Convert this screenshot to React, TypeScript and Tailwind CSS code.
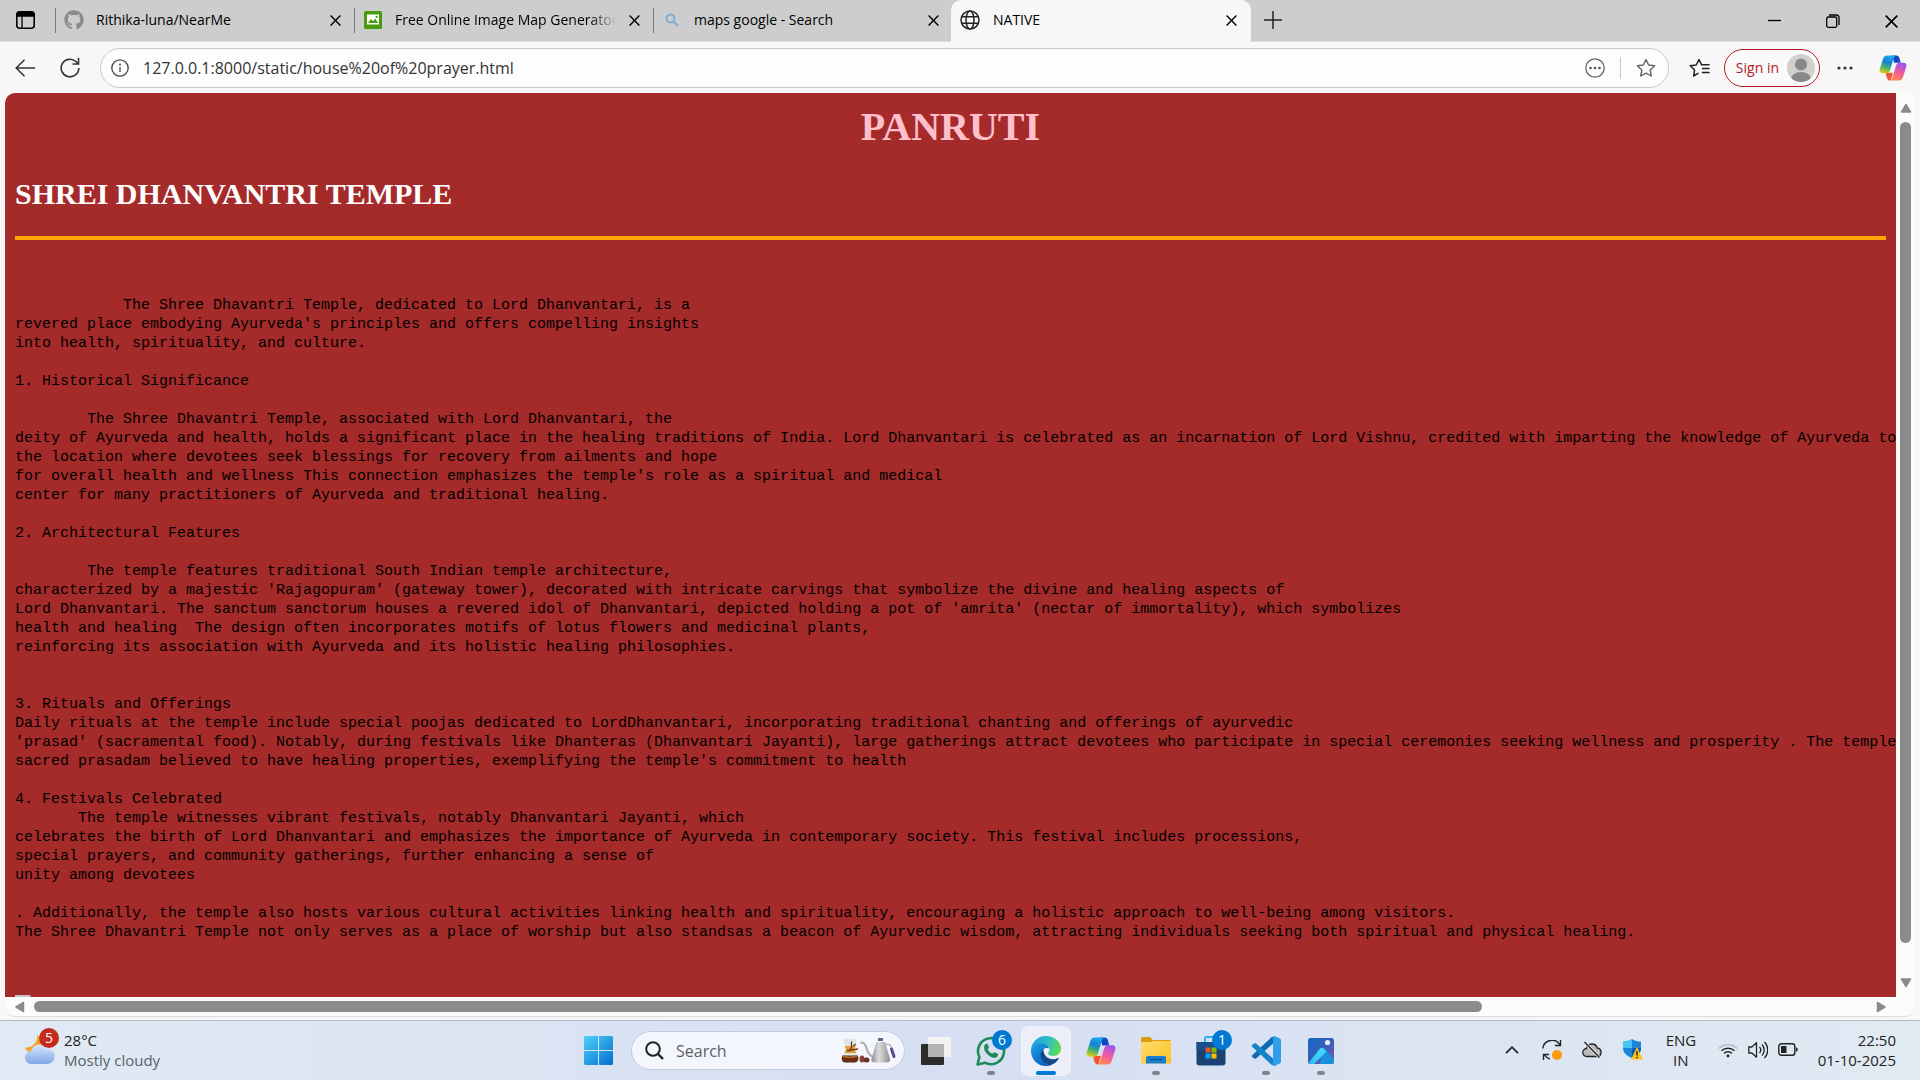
import type { ReactNode } from "react";
import { FaGithub } from "react-icons/fa";

const ui = "font-['Open_Sans','Noto_Sans',sans-serif]";

function CloseIcon({ size = 11 }: { size?: number }) {
  return (
    <svg width={size} height={size} viewBox="0 0 11 11" fill="none" stroke="currentColor" strokeWidth="1.4">
      <path d="M.6.6l9.8 9.8M10.4.6L.6 10.4" />
    </svg>
  );
}

function GlobeIcon() {
  return (
    <svg width="20" height="20" viewBox="0 0 20 20" fill="none" stroke="#222" strokeWidth="1.5">
      <circle cx="10" cy="10" r="9" />
      <ellipse cx="10" cy="10" rx="4" ry="9" />
      <path d="M1.8 6.8h16.4M1.8 13.2h16.4" />
    </svg>
  );
}

function PictureIcon() {
  return (
    <svg width="18" height="18" viewBox="0 0 18 18">
      <rect width="18" height="18" rx="1.5" fill="#4a9c0c" />
      <rect x="3" y="3.5" width="12" height="10" fill="#fff" />
      <path d="M4 12l3-4 2 2.2 2-2.6 3.2 4.4z" fill="#4a9c0c" />
      <circle cx="12.6" cy="5.8" r="1.1" fill="#4a9c0c" />
    </svg>
  );
}

function SearchTabIcon() {
  return (
    <svg width="14" height="14" viewBox="0 0 14 14" fill="none" stroke="#7aaad6" strokeWidth="1.8">
      <circle cx="5.5" cy="5.5" r="4" />
      <path d="M8.5 8.5l4.5 4.5" />
    </svg>
  );
}

function Tab({ icon, title, faded }: { icon: ReactNode; title: string; faded?: boolean }) {
  return (
    <div className="flex h-10 w-[299px] items-center">
      <div className="h-[25px] w-px shrink-0 bg-[#777]" />
      <div className="ml-2 flex w-5 shrink-0 items-center justify-center">{icon}</div>
      <button
        className={
          faded
            ? "ml-3 w-[221px] overflow-hidden whitespace-nowrap text-left [mask-image:linear-gradient(to_right,#000_88%,transparent)]"
            : "ml-3 w-[221px] overflow-hidden whitespace-nowrap text-left"
        }
      >
        {title}
      </button>
      <button aria-label="Close tab" className="ml-[13px]">
        <CloseIcon />
      </button>
    </div>
  );
}

function TabStrip() {
  return (
    <header className="flex h-[42px] items-start border-b border-[#dedede] bg-[#cdcdcd] text-sm text-black">
      <button aria-label="Tab actions" className="mt-[11px] mr-[20px] ml-4">
        <svg width="19" height="18" viewBox="0 0 19 18" fill="none" stroke="#000" strokeWidth="1.6">
          <rect x=".8" y=".8" width="17.4" height="16.4" rx="3" />
          <path d="M1 3.2A2.6 2.6 0 013.500 1h12a2.600 2.600 0 012.500 2.500V5H1z" fill="#000" />
          <path d="M6 5v12" strokeWidth="1.300" />
        </svg>
      </button>
      <Tab icon={<FaGithub size={20} color="#8a8d90" />} title="Rithika-luna/NearMe" />
      <Tab icon={<PictureIcon />} title="Free Online Image Map Generator" faded />
      <Tab icon={<SearchTabIcon />} title="maps google - Search" />
      <div className="-ml-px flex h-[42px] w-[300px] items-center rounded-t-[10px] bg-[#f7f7f7] pb-[2px]">
        <div className="ml-[9px]">
          <GlobeIcon />
        </div>
        <button className="ml-[13px] flex-1 text-left">NATIVE</button>
        <button aria-label="Close tab" className="mr-[14px]">
          <CloseIcon />
        </button>
      </div>
      <button aria-label="New tab" className="mt-[11px] ml-[13px]">
        <svg width="18" height="18" viewBox="0 0 18 18" stroke="#222" strokeWidth="1.500">
          <path d="M9 0v18M0 9h18" />
        </svg>
      </button>
      <div className="mt-[14px] mr-[22px] ml-auto flex items-center gap-[45px]">
        <button aria-label="Minimize">
          <svg width="13" height="14" viewBox="0 0 13 14" stroke="#000" strokeWidth="1.300">
            <path d="M0 6.500h13" />
          </svg>
        </button>
        <button aria-label="Restore">
          <svg width="14" height="14" viewBox="0 0 14 14" fill="none" stroke="#000" strokeWidth="1.300">
            <rect x=".7" y="3" width="10" height="10.300" rx="1.500" />
            <path d="M3 1h7.500A2.500 2.500 0 0113 3.500V11" />
          </svg>
        </button>
        <button aria-label="Close window">
          <CloseIcon size={13} />
        </button>
      </div>
    </header>
  );
}

const starPath = "M10 1.500l2.600 5.500 6 .8-4.400 4.200 1.100 6L10 15.100 4.700 18l1.100-6L1.400 7.800l6-.8z";

function Toolbar() {
  return (
    <div className="flex h-[51px] items-center bg-[#f7f7f7]">
      <button aria-label="Back" className="ml-[15px]">
        <svg width="20" height="18" viewBox="0 0 20 18" fill="none" stroke="#333" strokeWidth="1.500">
          <path d="M20 9H1M9.500.8L1.200 9l8.300 8.200" />
        </svg>
      </button>
      <button aria-label="Refresh" className="ml-[25px]">
        <svg width="20" height="20" viewBox="0 0 20 20" fill="none" stroke="#333" strokeWidth="1.600">
          <path d="M18.800 10a8.800 8.800 0 11-2.900-6.500l2.300 2.300M18.500 0v6h-6" />
        </svg>
      </button>
      <div className="ml-5 flex h-10 flex-1 items-center rounded-full border border-[#c9c9c9] bg-[#fdfdfd]">
        <svg className="ml-[10px]" width="18" height="18" viewBox="0 0 18 18" fill="none" stroke="#444" strokeWidth="1.300">
          <circle cx="9" cy="9" r="8.200" />
          <path d="M9 8v5" />
          <circle cx="9" cy="5.500" r=".4" fill="#444" />
        </svg>
        <input
          aria-label="Address"
          readOnly
          defaultValue="127.0.0.1:8000/static/house%20of%20prayer.html"
          className="ml-[14px] min-w-0 flex-1 bg-transparent text-base text-[#333] outline-none"
        />
        <button aria-label="Page options">
          <svg width="20" height="20" viewBox="0 0 20 20" fill="none" stroke="#666" strokeWidth="1.300">
            <circle cx="10" cy="10" r="9.200" />
            <g fill="#555" stroke="none">
              <circle cx="5.500" cy="10" r="1.300" />
              <circle cx="10" cy="10" r="1.300" />
              <circle cx="14.500" cy="10" r="1.300" />
            </g>
          </svg>
        </button>
        <div className="mx-[15px] h-[22px] w-px bg-[#c8c8c8]" />
        <button aria-label="Add to favorites" className="mr-3">
          <svg width="20" height="20" viewBox="0 0 20 20" fill="none" stroke="#666" strokeWidth="1.400" strokeLinejoin="round">
            <path d={starPath} />
          </svg>
        </button>
      </div>
      <button aria-label="Favorites" className="ml-5">
        <svg width="21" height="20" viewBox="0 0 21 20" fill="none" stroke="#222" strokeWidth="1.500" strokeLinejoin="round" strokeLinecap="round">
          <path d="M9 15.300L4.600 18l1-6L1.200 7.800l6-.8L10 1.500l2.600 5.300h7.400M13.500 10.500h6.500M13.500 14.500h6.500" />
        </svg>
      </button>
      <button className="ml-[14px] flex h-[38px] items-center gap-2 rounded-full border border-[#b5191d] bg-[#fafafa] pr-1 pl-[11px] text-sm text-[#b5191d]">
        Sign in
        <svg width="28" height="28" viewBox="0 0 28 28">
          <clipPath id="avatar">
            <circle cx="14" cy="14" r="14" />
          </clipPath>
          <g clipPath="url(#avatar)">
            <rect width="28" height="28" fill="#d2d0ce" />
            <circle cx="14" cy="10.500" r="6" fill="#8a8886" />
            <ellipse cx="14" cy="25" rx="10" ry="7" fill="#8a8886" />
          </g>
        </svg>
      </button>
      <button aria-label="Settings and more" className="ml-[17px]">
        <svg width="16" height="4" viewBox="0 0 16 4" fill="#333">
          <circle cx="2" cy="2" r="1.600" />
          <circle cx="8" cy="2" r="1.600" />
          <circle cx="14" cy="2" r="1.600" />
        </svg>
      </button>
      <button aria-label="Copilot" className="mr-[13px] ml-[26px]">
        <CopilotIcon id="bar" size={28} />
      </button>
    </div>
  );
}

function CopilotIcon({ id, size }: { id: string; size: number }) {
  return (
    <svg width={size} height={size} viewBox="0 0 30 30">
      <defs>
        <linearGradient id={id + "a"} x1="0.500" y1="0" x2="0.200" y2="1">
          <stop offset="0" stopColor="#1aa7f0" />
          <stop offset=".35" stopColor="#1583d8" />
          <stop offset=".65" stopColor="#45b36b" />
          <stop offset="1" stopColor="#f3cf12" />
        </linearGradient>
        <linearGradient id={id + "b"} x1="0.700" y1="0" x2="0.300" y2="1">
          <stop offset="0" stopColor="#9a55f0" />
          <stop offset=".5" stopColor="#ee5aa0" />
          <stop offset="1" stopColor="#ff8a4c" />
        </linearGradient>
      </defs>
      <path d="M14 1.500h4.500c2 0 2.800 1.200 3.400 3l1.400 5h-7z" fill="#1248c4" />
      <path d="M7 20h8l-2.500 8.500c-2.800 0-3.500-1-4.100-3z" fill="#f4553a" />
      <path d="M9 1.500h9c-1.500.8-2 2.500-2.600 4.500l-3.600 11.500c-.7 2.200-1.600 3.200-3.800 3.200H4c-3 0-4-2-3.200-4.600L4.400 5C5.200 2.600 6.500 1.500 9 1.500z" fill={"url(#" + id + "a)"} />
      <path d="M21 28.500h-9c1.500-.8 2-2.500 2.600-4.500l3.600-11.500c.7-2.200 1.600-3.200 3.800-3.200h4c3 0 4 2 3.200 4.600L25.600 25c-.8 2.400-2.100 3.500-4.600 3.500z" fill={"url(#" + id + "b)"} />
    </svg>
  );
}

const article = `            The Shree Dhavantri Temple, dedicated to Lord Dhanvantari, is a
revered place embodying Ayurveda's principles and offers compelling insights
into health, spirituality, and culture.

1. Historical Significance

        The Shree Dhavantri Temple, associated with Lord Dhanvantari, the
deity of Ayurveda and health, holds a significant place in the healing traditions of India. Lord Dhanvantari is celebrated as an incarnation of Lord Vishnu, credited with imparting the knowledge of Ayurveda to h
the location where devotees seek blessings for recovery from ailments and hope
for overall health and wellness This connection emphasizes the temple's role as a spiritual and medical
center for many practitioners of Ayurveda and traditional healing.

2. Architectural Features

        The temple features traditional South Indian temple architecture,
characterized by a majestic 'Rajagopuram' (gateway tower), decorated with intricate carvings that symbolize the divine and healing aspects of
Lord Dhanvantari. The sanctum sanctorum houses a revered idol of Dhanvantari, depicted holding a pot of 'amrita' (nectar of immortality), which symbolizes
health and healing  The design often incorporates motifs of lotus flowers and medicinal plants,
reinforcing its association with Ayurveda and its holistic healing philosophies.


3. Rituals and Offerings
Daily rituals at the temple include special poojas dedicated to LordDhanvantari, incorporating traditional chanting and offerings of ayurvedic
'prasad' (sacramental food). Notably, during festivals like Dhanteras (Dhanvantari Jayanti), large gatherings attract devotees who participate in special ceremonies seeking wellness and prosperity . The temple i
sacred prasadam believed to have healing properties, exemplifying the temple's commitment to health

4. Festivals Celebrated
       The temple witnesses vibrant festivals, notably Dhanvantari Jayanti, which
celebrates the birth of Lord Dhanvantari and emphasizes the importance of Ayurveda in contemporary society. This festival includes processions,
special prayers, and community gatherings, further enhancing a sense of
unity among devotees

. Additionally, the temple also hosts various cultural activities linking health and spirituality, encouraging a holistic approach to well-being among visitors.
The Shree Dhavantri Temple not only serves as a place of worship but also standsas a beacon of Ayurvedic wisdom, attracting individuals seeking both spiritual and physical healing.`;

function Arrow({ d, w, h }: { d: string; w: number; h: number }) {
  return (
    <svg className="shrink-0" width={w} height={h} viewBox={`0 0 ${w} ${h}`} fill="#8b8b8b" stroke="#8b8b8b" strokeWidth="1.500" strokeLinejoin="round">
      <path d={d} />
    </svg>
  );
}

function PageView() {
  return (
    <div className="flex min-h-0 flex-1 bg-[#f7f7f7] pr-[5px] pb-[3px] pl-[5px]">
      <div className="flex min-w-0 flex-1 overflow-hidden rounded-[10px] border-b border-[#dcdcdc] bg-[#fcfcfc]">
        <div className="flex min-w-0 flex-1 flex-col">
          <main className="flex min-h-0 flex-1 flex-col overflow-hidden bg-[#a52a2a] px-[10px] font-['Liberation_Serif',serif]">
            <h1 className="mt-[11px] text-center text-[40px] leading-[46px] font-bold text-[#ffc0cb]">PANRUTI</h1>
            <h2 className="mt-[27px] text-[30px] leading-[34px] font-bold text-white">SHREI DHANVANTRI TEMPLE</h2>
            <hr className="mt-[25px] h-1 shrink-0 border-0 bg-[#ffa500]" />
            <pre className="mt-14 font-['Liberation_Mono',monospace] text-[15px] leading-[19px] text-black">{article}</pre>
            <div className="mt-auto h-[2px] w-4 shrink-0 rounded-tr bg-[#c9c4c4]" />
          </main>
          <div className="flex h-[19px] shrink-0 items-center pr-[10px] pl-[10px]">
            <Arrow d="M8.500 1.500v9L1 6z" w={10} h={12} />
            <div className="mx-[9px] flex-1">
              <div className="h-[11px] w-[79%] rounded-full bg-[#8b8b8b]" />
            </div>
            <Arrow d="M1.500 1.500v9L9 6z" w={10} h={12} />
          </div>
        </div>
        <div className="flex w-[19px] shrink-0 flex-col items-center pt-[10px] pb-[28px]">
          <Arrow d="M1.500 9h9L6 1.500z" w={12} h={10} />
          <div className="mt-[9px] mb-2 min-h-0 flex-1">
            <div className="h-[96.800%] w-[11px] rounded-full bg-[#8b8b8b]" />
          </div>
          <Arrow d="M1.500 1h9L6 8.500z" w={12} h={10} />
        </div>
      </div>
    </div>
  );
}

function Badge({ children }: { children: ReactNode }) {
  return (
    <span className="absolute top-[3px] right-[3px] flex size-5 items-center justify-center rounded-full bg-[#0078d4] text-sm leading-5 text-white">
      {children}
    </span>
  );
}

function TaskButton({ label, state, badge, children }: { label: string; state?: "open" | "active"; badge?: string; children: ReactNode }) {
  return (
    <button
      aria-label={label}
      className={
        state === "active"
          ? "relative flex size-12 items-center justify-center rounded-md bg-[#eceff9] outline outline-white/60"
          : "relative flex size-12 items-center justify-center"
      }
    >
      {children}
      {badge && <Badge>{badge}</Badge>}
      {state === "open" && <span className="absolute bottom-0 left-5 h-1 w-2 rounded-full bg-[#7f838c]" />}
      {state === "active" && <span className="absolute bottom-0 left-[14px] h-1 w-5 rounded-full bg-[#0078d4]" />}
    </button>
  );
}

function WhatsAppIcon() {
  return (
    <svg width="30" height="30" viewBox="0 0 30 30" fill="none">
      <path d="M1.500 28.500l1.900-7.500A13 13 0 119 26.700z" stroke="#1f8a55" strokeWidth="2.600" strokeLinejoin="round" />
      <path d="M9 8.500c1-1.200 2.400-1 2.900.2l1 2.300c.3.800-.8 1.700-1.200 2.200 1 2 2.600 3.500 4.900 4.600.6-.5 1.300-1.700 2.200-1.400l2.500 1.200c1 .5 1 1.600.3 2.600-1.400 2-4 2-6 1-3.500-1.600-5.500-3.700-7-6.900-.8-2-.8-4.300.4-5.800z" fill="#1f8a55" />
    </svg>
  );
}

function EdgeIcon() {
  return (
    <svg width="30" height="30" viewBox="0 0 30 30">
      <defs>
        <linearGradient id="edgeTop" x1="0" y1="0.300" x2="1" y2="0.600">
          <stop offset="0" stopColor="#1d9fe0" />
          <stop offset=".5" stopColor="#2dbfc4" />
          <stop offset="1" stopColor="#62dc50" />
        </linearGradient>
        <linearGradient id="edgeLeft" x1="0" y1="0" x2="0.700" y2="1">
          <stop offset="0" stopColor="#1da0e8" />
          <stop offset="1" stopColor="#0c62c0" />
        </linearGradient>
      </defs>
      <path d="M0 14C.5 6 7 0 15 0c8.500 0 15 6 15 12.500 0 4.500-3.500 7.500-7.500 7.500-3.500 0-5.500-1-5.500-2.500 0-1 1.500-1.500 1.500-4 0-3-3.500-5.500-8-5.500C6 8 1.500 10.500 0 14z" fill="url(#edgeTop)" />
      <path d="M0 14c1-4 5.500-6.500 10-6.500 4 0 7.500 2 8.300 5-3-1.700-8.300 0-8.300 6.500 0 5.500 4 9.500 9 10.400-1.300.4-2.600.6-4 .6C6 30-.3 23 0 14z" fill="url(#edgeLeft)" />
      <path d="M12.500 13c-3 2-3.500 6-2.500 9 1.400 4.500 5.500 7.300 9 7.400 3.500-1 6.800-3.400 8.700-6.600.4-.7-.2-1-.7-.7-2 1-4.200 1.300-6 1.100-5-.5-9-4.700-8.500-10.200z" fill="#114a8b" />
    </svg>
  );
}

function FolderIcon() {
  return (
    <svg width="30" height="27" viewBox="0 0 30 27">
      <defs>
        <linearGradient id="folder" x1="0" y1="0" x2="1" y2="1">
          <stop offset="0" stopColor="#ffdc6a" />
          <stop offset="1" stopColor="#fcc02a" />
        </linearGradient>
      </defs>
      <path d="M0 1.500A1.500 1.500 0 011.500 0H9l3 3h16.500A1.500 1.500 0 0130 4.500V10H0z" fill="#dd9a0a" />
      <path d="M0 5h10l2-1h17a1 1 0 011 1v20.500a1 1 0 01-1 1H1a1 1 0 01-1-1z" fill="url(#folder)" />
      <path d="M5 26.500V21a2 2 0 012-2h16a2 2 0 012 2v5.500z" fill="#1a7fd0" />
      <path d="M9 22.500h12" stroke="#0b4f92" strokeWidth="1.300" />
    </svg>
  );
}

function StoreIcon() {
  return (
    <svg width="30" height="30" viewBox="0 0 30 30">
      <path d="M9 7V2.500A1.500 1.500 0 0110.500 1h9A1.500 1.500 0 0121 2.500V7" fill="none" stroke="#2bb2ec" strokeWidth="2" />
      <path d="M.5 6h29v20.500A3 3 0 0126.500 29.500h-23a3 3 0 01-3-3z" fill="#1a4273" />
      <path d="M.5 6h29v8H.5z" fill="#17508c" />
      <path d="M9.500 11.500h5v5h-5z" fill="#f25022" />
      <path d="M15.500 11.500h5v5h-5z" fill="#7fba00" />
      <path d="M9.500 17.500h5v5h-5z" fill="#00a4ef" />
      <path d="M15.500 17.500h5v5h-5z" fill="#ffb900" />
    </svg>
  );
}

function CodeIcon() {
  return (
    <svg width="30" height="30" viewBox="0 0 30 30">
      <path d="M22 7.500L4.500 23 1.500 21.500a1.500 1.500 0 01-.3-2.200L20.500 1.200 23 .5z" fill="#0f6db3" />
      <path d="M22 22.500L4.500 7 1.500 8.500a1.500 1.500 0 00-.3 2.200l19.300 18.100 2.500.7z" fill="#1583c9" />
      <path d="M22 .3c.4-.4 1-.4 1.500-.2l5.500 2.500c.7.4 1 1 1 1.800v21.200c0 .8-.3 1.400-1 1.800l-5.500 2.500c-.5.200-1.100.2-1.500-.2z" fill="#2f9fea" />
    </svg>
  );
}

function PhotosIcon() {
  return (
    <svg width="26" height="26" viewBox="0 0 26 26">
      <defs>
        <linearGradient id="photos" x1="0" y1="0" x2="1" y2="1">
          <stop offset="0" stopColor="#0f6cc4" />
          <stop offset=".5" stopColor="#3a5db8" />
          <stop offset="1" stopColor="#8a55b0" />
        </linearGradient>
        <linearGradient id="hill" x1="0" y1="1" x2="1" y2="0">
          <stop offset="0" stopColor="#2bc3f5" />
          <stop offset="1" stopColor="#48d8ff" />
        </linearGradient>
      </defs>
      <rect width="26" height="26" rx="2.500" fill="url(#photos)" />
      <path d="M14 10.500c1-1 2-.8 3 .3L26 21v2.500a2.500 2.500 0 01-2.500 2.500H12z" fill="#1791e0" />
      <path d="M1 24.500L11.500 11c1.500-1.700 3-1.700 4.500 0l2.500 2.500L6 26H2.500z" fill="url(#hill)" />
      <circle cx="19.500" cy="4.500" r="2.600" fill="#e8f2ff" />
    </svg>
  );
}

function CoffeeArt() {
  return (
    <svg className="shrink-0" width="55" height="26" viewBox="0 0 55 26">
      <defs>
        <linearGradient id="kettle" x1="0" x2="1">
          <stop offset="0" stopColor="#8d8d8d" />
          <stop offset=".4" stopColor="#dcdcdc" />
          <stop offset="1" stopColor="#8f8f8f" />
        </linearGradient>
      </defs>
      <path d="M2 1h14l-3.500 10 5 8c1 3-.5 5.500-3 5.500H4c-3 0-4-2.500-3-5.500l4.500-8z" fill="#dfe6ea" />
      <path d="M1.500 17.500h15.300c1.500 3.500-.2 7-3 7H4c-3 0-4-3.500-2.500-7z" fill="#6b2d11" />
      <path d="M2 18c3 1.500 11 1.500 14 0" stroke="#b36a30" strokeWidth="1.500" fill="none" />
      <path d="M3.500 8h11.500l-1.500 3 2 4h-12L5 11z" fill="#e3a03a" />
      <path d="M11 3.500c-2 3 1 4-1 7l-2 3M6 12.500l11-1.500M12 8l3-2" stroke="#7a3512" strokeWidth="1.300" fill="none" />
      <ellipse cx="21" cy="21" rx="2.500" ry="3.600" fill="#8a4136" />
      <ellipse cx="25.500" cy="22" rx="3" ry="2.500" fill="#6e2e26" />
      <path d="M19.500 4.500c8-.5 4 11 12 14" stroke="#a9a9a9" strokeWidth="2" fill="none" />
      <path d="M35.500 4h8.500l5 17c.7 2.500-1 3.500-4 3.500H34.500c-3 0-4.700-1-4-3.500z" fill="url(#kettle)" />
      <path d="M37 0h5v3h-5z" fill="#6d5fa0" />
      <path d="M44 6.500c4-1 6 0 7 4" stroke="#bbb" strokeWidth="1.500" fill="none" />
      <path d="M50.500 11l2.500 7.500" stroke="#5b4b92" strokeWidth="3" strokeLinecap="round" />
    </svg>
  );
}

function Taskbar() {
  return (
    <footer className="grid h-[60px] shrink-0 grid-cols-[1fr_auto_1fr] items-center border-t border-[#b3b9c7] bg-linear-to-r from-[#e0eaf4] via-[#d6dff2] to-[#e0eaf3] text-[#222]">
      <button className="ml-[25px] flex w-fit items-center gap-[9px] pb-[2px] text-left">
        <span className="relative">
          <svg width="30" height="30" viewBox="0 0 30 30">
            <defs>
              <linearGradient id="cloud" x1="0" y1="0" x2="0" y2="1">
                <stop offset="0" stopColor="#d8e6fb" />
                <stop offset="1" stopColor="#7fa6e6" />
              </linearGradient>
            </defs>
            <path d="M12 0c1 7-4 13-12 12.500C2 18 8 20 13 17s6-13-1-17z" fill="#f5a322" />
            <path d="M7 29a6.500 6.500 0 01-1-13 8 8 0 0115-2 7.500 7.500 0 012 15z" fill="url(#cloud)" />
          </svg>
          <span className="absolute -top-[7px] left-[14px] flex size-5 items-center justify-center rounded-full bg-[#c42b1c] text-sm leading-5 text-white">5</span>
        </span>
        <span className="flex flex-col text-[15px] leading-5">
          <span>28°C</span>
          <span className="text-[#5a6068]">Mostly cloudy</span>
        </span>
      </button>

      <div className="flex items-center pl-[9px]">
        <button aria-label="Start" className="mr-[18px]">
          <svg width="29" height="29" viewBox="0 0 29 29">
            <defs>
              <linearGradient id="win" gradientUnits="userSpaceOnUse" x1="0" y1="0" x2="29" y2="29">
                <stop offset="0" stopColor="#4fd0fb" />
                <stop offset="1" stopColor="#0070d0" />
              </linearGradient>
            </defs>
            <path d="M1 0h13v14H0V1zM15 0h13l1 1v13H15zM0 15h14v14H1l-1-1zM15 15h14v13l-1 1H15z" fill="url(#win)" />
          </svg>
        </button>
        <label className="mr-[7px] flex h-[39px] w-[274px] items-center rounded-full border border-[#c3cbe0] bg-[#f3f6fc] pr-2 pl-[13px]">
          <svg width="19" height="19" viewBox="0 0 19 19" fill="none" stroke="#222" strokeWidth="2">
            <circle cx="8" cy="8" r="6.800" />
            <path d="M13 13l5 5" strokeWidth="2.400" />
          </svg>
          <input aria-label="Search" placeholder="Search" className="ml-3 min-w-0 flex-1 bg-transparent text-base outline-none placeholder:text-[#5c5f66]" />
          <CoffeeArt />
        </label>
        <div className="flex items-center gap-[7px]">
          <TaskButton label="Task view">
            <svg width="30" height="28" viewBox="0 0 30 28">
              <rect y="7" width="23" height="21" rx="1" fill="#2c2c2c" />
              <rect x="7" width="23" height="20" rx="1" fill="#f3f3f3" />
              <path d="M7 7h16v13H7z" fill="#b5b5b5" />
            </svg>
          </TaskButton>
          <TaskButton label="WhatsApp" state="open" badge="6">
            <WhatsAppIcon />
          </TaskButton>
          <TaskButton label="Edge" state="active">
            <EdgeIcon />
          </TaskButton>
          <TaskButton label="Copilot">
            <CopilotIcon id="task" size={30} />
          </TaskButton>
          <TaskButton label="File Explorer" state="open">
            <FolderIcon />
          </TaskButton>
          <TaskButton label="Microsoft Store" badge="1">
            <StoreIcon />
          </TaskButton>
          <TaskButton label="Visual Studio Code" state="open">
            <CodeIcon />
          </TaskButton>
          <TaskButton label="Photos" state="open">
            <PhotosIcon />
          </TaskButton>
        </div>
      </div>

      <div className="mr-6 flex items-center justify-end pb-[2px] text-[15px] leading-5">
        <button aria-label="Show hidden icons">
          <svg width="14" height="8" viewBox="0 0 14 8" fill="none" stroke="#222" strokeWidth="1.700">
            <path d="M1 7.200L7 1.200l6 6" />
          </svg>
        </button>
        <svg className="ml-[23px]" width="20" height="20" viewBox="0 0 20 20" fill="none" stroke="#222" strokeWidth="1.400">
          <path d="M.8 8.500A9.200 9.200 0 0118 5M18.500 0v5.500H13M8 19A9 9 0 012.500 15M1.500 20v-5.500H7" />
          <circle cx="15" cy="15" r="5" fill="#ff9a0a" stroke="none" />
        </svg>
        <svg className="ml-5" width="20" height="17" viewBox="0 0 20 17" fill="none" stroke="#222" strokeWidth="1.300">
          <path d="M5 15.500a4 4 0 01-.5-8 5.500 5.500 0 0110.700-.5 4.300 4.300 0 01.3 8.500z" fill="#bbb" />
          <path d="M2.500 1l15 15.500" stroke="#e0e8f3" strokeWidth="3" />
          <path d="M2.500 1l15 15.500" />
        </svg>
        <svg className="ml-[21px]" width="20" height="21" viewBox="0 0 20 21">
          <path d="M9 0c3 2 6 2.600 9 2.600V9c0 5-4 8-9 10C4 17 0 14 0 9V2.600C3 2.600 6 2 9 0z" fill="#1b86d8" />
          <path d="M9 0v9H0V2.600C3 2.600 6 2 9 0z" fill="#4cc3f5" />
          <path d="M9 9h9c0 5-4 8-9 10z" fill="#0b5fb0" />
          <path d="M14 8l6 12.500H8z" fill="#ffc21a" />
          <path d="M14 12v4.500M14 17.800v1.400" stroke="#222" strokeWidth="1.400" />
        </svg>
        <button className="ml-[23px] w-[30px] text-center">
          <span className="block">ENG</span>
          <span className="block">IN</span>
        </button>
        <svg className="ml-[22px]" width="20" height="16" viewBox="0 0 20 16" fill="none" stroke="#222" strokeWidth="1.500">
          <path d="M.8 6.500a13 13 0 0118.400 0" stroke="#b5bcc6" />
          <path d="M3.600 8.800a9 9 0 0112.800 0M6.200 11.400a5.400 5.400 0 017.600 0" />
          <circle cx="10" cy="14" r="1.400" fill="#222" stroke="none" />
        </svg>
        <svg className="ml-[10px]" width="20" height="18" viewBox="0 0 20 18" fill="none" stroke="#222" strokeWidth="1.300" strokeLinejoin="round">
          <path d="M.8 6h3L8.500 1.800v14.400L3.800 12h-3zM11.500 6a4.500 4.500 0 010 6M14 3.500a8 8 0 010 11M16.500 1a11.500 11.500 0 010 16" />
        </svg>
        <svg className="ml-[10px]" width="20" height="13" viewBox="0 0 20 13" fill="none" stroke="#222" strokeWidth="1.400">
          <rect x=".8" y=".8" width="16" height="11.400" rx="2.500" />
          <rect x="3" y="3" width="5.500" height="7" fill="#222" stroke="none" />
          <path d="M18 4.500h.6c.8 0 1 .8 1 2s-.2 2-1 2H18z" fill="#222" stroke="none" />
        </svg>
        <button className="ml-5 text-right">
          <span className="block">22:50</span>
          <span className="block">01-10-2025</span>
        </button>
      </div>
    </footer>
  );
}

export default function App() {
  return (
    <div className={`flex h-screen flex-col overflow-hidden bg-[#f7f7f7] ${ui}`}>
      <TabStrip />
      <Toolbar />
      <PageView />
      <Taskbar />
    </div>
  );
}
